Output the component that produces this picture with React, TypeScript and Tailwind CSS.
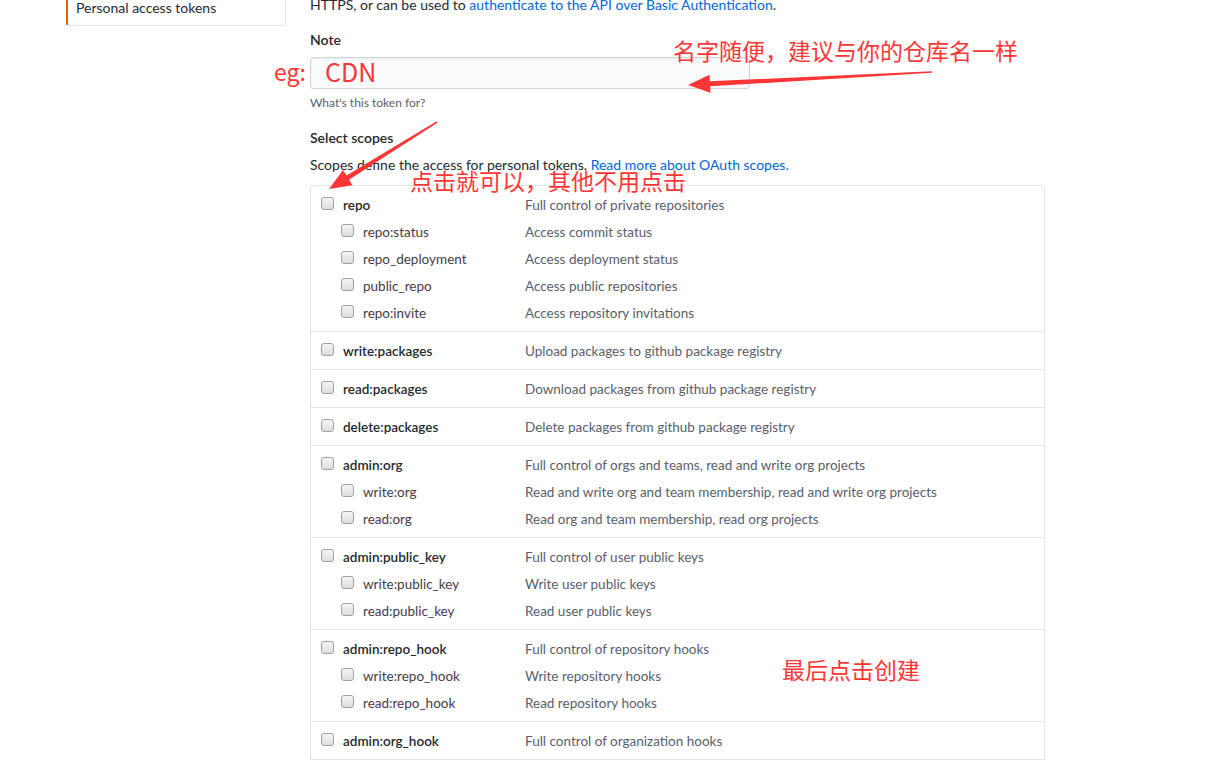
import React from 'react';

type Scope = { name: string; desc: string; subs?: { name: string; desc: string }[] };

const SCOPES: Scope[] = [
  {
    name: 'repo',
    desc: 'Full control of private repositories',
    subs: [
      { name: 'repo:status', desc: 'Access commit status' },
      { name: 'repo_deployment', desc: 'Access deployment status' },
      { name: 'public_repo', desc: 'Access public repositories' },
      { name: 'repo:invite', desc: 'Access repository invitations' },
    ],
  },
  { name: 'write:packages', desc: 'Upload packages to github package registry' },
  { name: 'read:packages', desc: 'Download packages from github package registry' },
  { name: 'delete:packages', desc: 'Delete packages from github package registry' },
  {
    name: 'admin:org',
    desc: 'Full control of orgs and teams, read and write org projects',
    subs: [
      { name: 'write:org', desc: 'Read and write org and team membership, read and write org projects' },
      { name: 'read:org', desc: 'Read org and team membership, read org projects' },
    ],
  },
  {
    name: 'admin:public_key',
    desc: 'Full control of user public keys',
    subs: [
      { name: 'write:public_key', desc: 'Write user public keys' },
      { name: 'read:public_key', desc: 'Read user public keys' },
    ],
  },
  {
    name: 'admin:repo_hook',
    desc: 'Full control of repository hooks',
    subs: [
      { name: 'write:repo_hook', desc: 'Write repository hooks' },
      { name: 'read:repo_hook', desc: 'Read repository hooks' },
    ],
  },
  { name: 'admin:org_hook', desc: 'Full control of organization hooks' },
  { name: 'gist', desc: 'Create gists' },
];

const Checkbox = () => (
  <span className="mt-[2px] h-[13px] w-[13px] shrink-0 rounded-[3px] border border-[#a0a0a0] bg-gradient-to-b from-[#f4f4f4] to-[#dedede]" />
);

const ScopeRow = ({ name, desc, sub }: { name: string; desc: string; sub?: boolean }) => (
  <div className={`flex h-[20px] items-start leading-[20px] ${sub ? 'mt-[7px]' : ''}`}>
    <div className={`flex w-[204px] shrink-0 items-start gap-[9px] ${sub ? 'pl-[20px]' : ''}`}>
      <Checkbox />
      <span className={sub ? 'text-[#473a48]' : 'font-semibold text-[#24292e]'}>{name}</span>
    </div>
    <span className="text-[#586069]">{desc}</span>
  </div>
);

const RED = 'text-[#ff3636]';
const cjk = { fontFamily: '"Noto Sans CJK SC", "Noto Sans", sans-serif' };

export default function App() {
  return (
    <div className="relative h-[760px] w-full overflow-hidden bg-white text-[14px] text-[#24292e]" style={{ fontFamily: 'Lato, "Noto Sans CJK SC", sans-serif' }}>
      <div className="flex gap-[24px] pl-[66px]">
        {/* sidebar */}
        <div className="w-[220px] shrink-0">
          <div className="-mt-[12px] flex h-[38px] items-center rounded-b-[3px] border border-[#e1e4e8] border-l-[2px] border-l-[#e36209] pl-[8px] pt-[1px] text-[14px] text-[#24292e]">
            Personal access tokens
          </div>
        </div>

        {/* main */}
        <div className="w-[735px] shrink-0">
          <p className="-mt-[5px] leading-[20px] text-[#24292e]">
            HTTPS, or can be used to <span className="text-[#0366d6]">authenticate to the API over Basic Authentication</span>.
          </p>

          <div className="mt-[15px] text-[14px] font-semibold leading-[20px]">Note</div>
          <div className="mt-[7px] flex h-[32px] w-[440px] items-center rounded-[3px] border border-[#d1d5da] bg-[#fafbfc] pb-[3px] pl-[14px] shadow-[inset_0_1px_2px_rgba(27,31,35,0.075)]">
            <span className={`text-[25px] leading-none ${RED}`} style={cjk}>CDN</span>
          </div>
          <div className="mt-[5px] text-[12px] leading-[18px] text-[#586069]">What's this token for?</div>

          <div className="mt-[16px] text-[14px] font-semibold leading-[20px]">Select scopes</div>
          <p className="mt-[7px] leading-[20px]">
            Scopes define the access for personal tokens. <span className="text-[#0366d6]">Read more about OAuth scopes.</span>
          </p>

          <div className="mt-[10px] rounded-[3px] border border-[#e1e4e8] text-[13.5px]">
            {SCOPES.map((s, i) => (
              <div key={s.name} className={`pb-[8px] pl-[10px] pt-[9px] ${i > 0 ? 'border-t border-[#e1e4e8]' : ''}`}>
                <ScopeRow name={s.name} desc={s.desc} />
                {s.subs?.map(c => <ScopeRow key={c.name} name={c.name} desc={c.desc} sub />)}
              </div>
            ))}
          </div>
        </div>
      </div>

      {/* annotations */}
      <div className={`absolute left-[274px] top-[56px] text-[23px] leading-[30px] ${RED}`} style={cjk}>eg:</div>
      <div className={`absolute left-[673px] top-[35px] text-[23px] leading-[30px] ${RED}`} style={cjk}>名字随便，建议与你的仓库名一样</div>
      <div className={`absolute left-[410px] top-[165px] text-[23px] leading-[30px] ${RED}`} style={cjk}>点击就可以，其他不用点击</div>
      <div className={`absolute left-[782px] top-[654px] text-[23px] leading-[30px] ${RED}`} style={cjk}>最后点击创建</div>

      <svg className="pointer-events-none absolute left-0 top-0" width="1215" height="760">
        <polygon
          fill="#ff3636"
          points="688,85 709.5,74.8 709.9,81.3 932,71.2 932,72.8 710.1,86.3 710.5,92.8"
        />
        <polygon
          fill="#ff3636"
          points="329,189 343,170 346.5,175.5 436.6,121.3 437.4,122.7 349,179.7 352.5,185.3"
        />
      </svg>
    </div>
  );
}
